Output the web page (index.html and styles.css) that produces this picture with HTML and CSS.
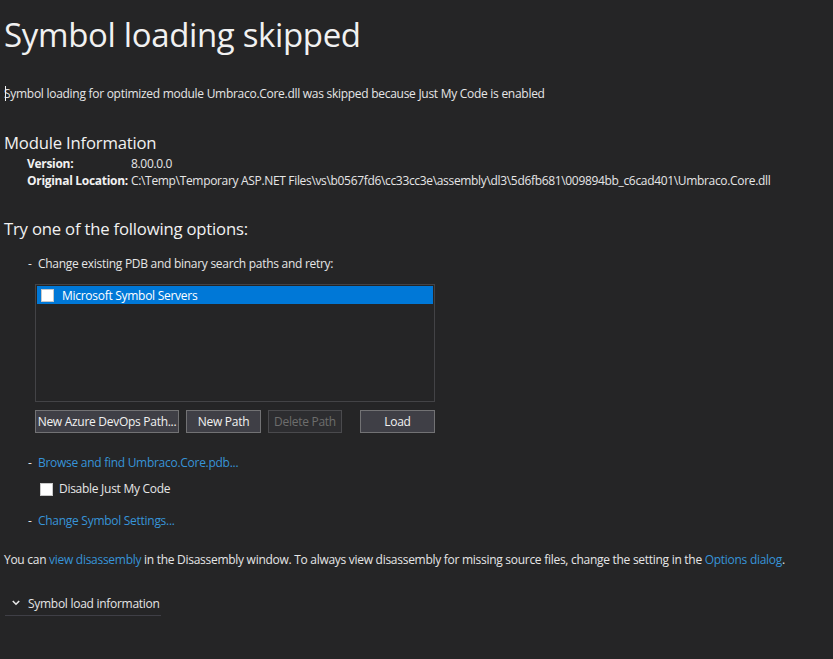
FILE: index.html
```html
<!DOCTYPE html>
<html>
<head>
<meta charset="utf-8">
<link rel="stylesheet" href="styles.css">
</head>
<body>
<div class="page">
  <h1 class="title">Symbol loading skipped</h1>
  <p class="summary"><span class="caret"></span>Symbol loading for optimized module Umbraco.Core.dll was skipped because Just My Code is enabled</p>

  <h2 class="section module-head">Module Information</h2>
  <div class="info">
    <span class="label">Version:</span><span class="value">8.00.0.0</span>
    <span class="label">Original Location:</span><span class="value">C:\Temp\Temporary ASP.NET Files\vs\b0567fd6\cc33cc3e\assembly\dl3\5d6fb681\009894bb_c6cad401\Umbraco.Core.dll</span>
  </div>

  <h2 class="section try-head">Try one of the following options:</h2>

  <div class="option first"><span class="dash">-</span><span>Change existing PDB and binary search paths and retry:</span></div>

  <div class="paths">
    <div class="listbox">
      <div class="row selected"><span class="box"></span><span>Microsoft Symbol Servers</span></div>
    </div>
    <div class="buttons">
      <button class="btn azure">New Azure DevOps Path...</button>
      <button class="btn newpath">New Path</button>
      <button class="btn delete" disabled>Delete Path</button>
      <button class="btn load">Load</button>
    </div>
  </div>

  <div class="option browse"><span class="dash">-</span><a class="link">Browse and find Umbraco.Core.pdb...</a></div>
  <label class="check"><span class="box"></span><span>Disable Just My Code</span></label>
  <div class="option settings"><span class="dash">-</span><a class="link">Change Symbol Settings...</a></div>

  <p class="note">You can <a class="link">view disassembly</a> in the Disassembly window. To always view disassembly for missing source files, change the setting in the <a class="link">Options dialog</a>.</p>

  <div class="expander">
    <svg class="chev" width="8" height="6" viewBox="0 0 8 6"><path d="M0.8 1 L4 4.2 L7.2 1" fill="none" stroke="#e8e8e8" stroke-width="1.6"/></svg>
    <span class="exp-text">Symbol load information</span>
  </div>
</div>
</body>
</html>
```
FILE: styles.css
```css
html, body {
  margin: 0;
  padding: 0;
  background: #252526;
}
body {
  font-family: "Open Sans", "Noto Sans", sans-serif;
  color: #f1f1f1;
  font-size: 12px;
  width: 833px;
  height: 659px;
  overflow: hidden;
}
.page {
  padding: 13px 0 0 4px;
}
.title {
  margin: 0;
  font-size: 33px;
  font-weight: 400;
  line-height: 44px;
  color: #f1f1f1;
  letter-spacing: -0.35px;
}
.summary {
  margin: 29px 0 0 0;
  line-height: 16px;
  font-size: 12px;
  color: #e6e6e6;
  position: relative;
  letter-spacing: -0.28px;
}
.caret {
  position: absolute;
  left: 1px;
  top: 0;
  width: 1px;
  height: 15px;
  background: #f1f1f1;
}
.section {
  margin: 0;
  font-size: 16.7px;
  font-weight: 400;
  line-height: 24px;
  color: #f1f1f1;
  letter-spacing: -0.2px;
}
.module-head { margin-top: 29px; }
.info {
  display: grid;
  grid-template-columns: 104px auto;
  margin: 0 0 0 23px;
  line-height: 17px;
  font-size: 12px;
  letter-spacing: -0.33px;
  color: #e6e6e6;
  white-space: nowrap;
}
.info .label { font-weight: 700; color: #f1f1f1; letter-spacing: -0.3px; }
.try-head { margin-top: 28px; }
.option {
  display: flex;
  line-height: 16px;
  font-size: 12px;
  letter-spacing: -0.28px;
  color: #e6e6e6;
}
.dash {
  width: 10px;
  margin-left: 24px;
}
.first { margin-top: 15px; }
.paths {
  margin: 12px 0 0 31px;
  width: 400px;
}
.listbox {
  border: 1px solid #434346;
  padding: 1px;
  box-sizing: content-box;
  width: 396px;
  height: 114px;
}
.row {
  display: flex;
  align-items: center;
  height: 18px;
  font-size: 12px;
  letter-spacing: -0.28px;
}
.row.selected {
  background: #0078d7;
  color: #ffffff;
}
.box {
  display: inline-block;
  width: 13px;
  height: 13px;
  background: #ffffff;
  border: 1px solid #c8c8c8;
  box-sizing: border-box;
}
.row .box { margin: 0 8px 0 4px; }
.buttons {
  display: flex;
  margin-top: 8px;
  height: 23px;
}
.btn {
  font-family: inherit;
  font-size: 12px;
  letter-spacing: -0.28px;
  height: 23px;
  padding: 0;
  margin: 0;
  background: #3f3f46;
  border: 1px solid #727274;
  color: #f1f1f1;
  line-height: 20px;
  white-space: nowrap;
}
.azure { width: 144px; }
.newpath { width: 75px; margin-left: 7px; }
.delete {
  width: 74px;
  margin-left: 7px;
  background: #2d2d30;
  border-color: #4a4a4d;
  color: #6d6d6d;
}
.load { width: 75px; margin-left: auto; }
.browse { margin-top: 22px; }
.link {
  color: #3794d8;
  text-decoration: none;
}
.check {
  display: flex;
  align-items: center;
  margin: 10px 0 0 36px;
  line-height: 16px;
  font-size: 12px;
  letter-spacing: -0.28px;
  color: #e6e6e6;
}
.check .box { margin-right: 6px; }
.settings { margin-top: 16px; }
.note {
  margin: 23px 0 0 0;
  line-height: 16px;
  font-size: 12px;
  letter-spacing: -0.28px;
  color: #e6e6e6;
}
.expander {
  display: flex;
  align-items: center;
  margin: 27px 0 0 1px;
  width: 156px;
  height: 16px;
  padding-bottom: 4px;
  border-bottom: 1px solid #3f3f46;
  font-size: 12px;
  letter-spacing: -0.28px;
  color: #e6e6e6;
  white-space: nowrap;
}
.chev { margin: 0 8px 0 7px; flex-shrink: 0; }
.exp-text { flex-shrink: 0; }
```
